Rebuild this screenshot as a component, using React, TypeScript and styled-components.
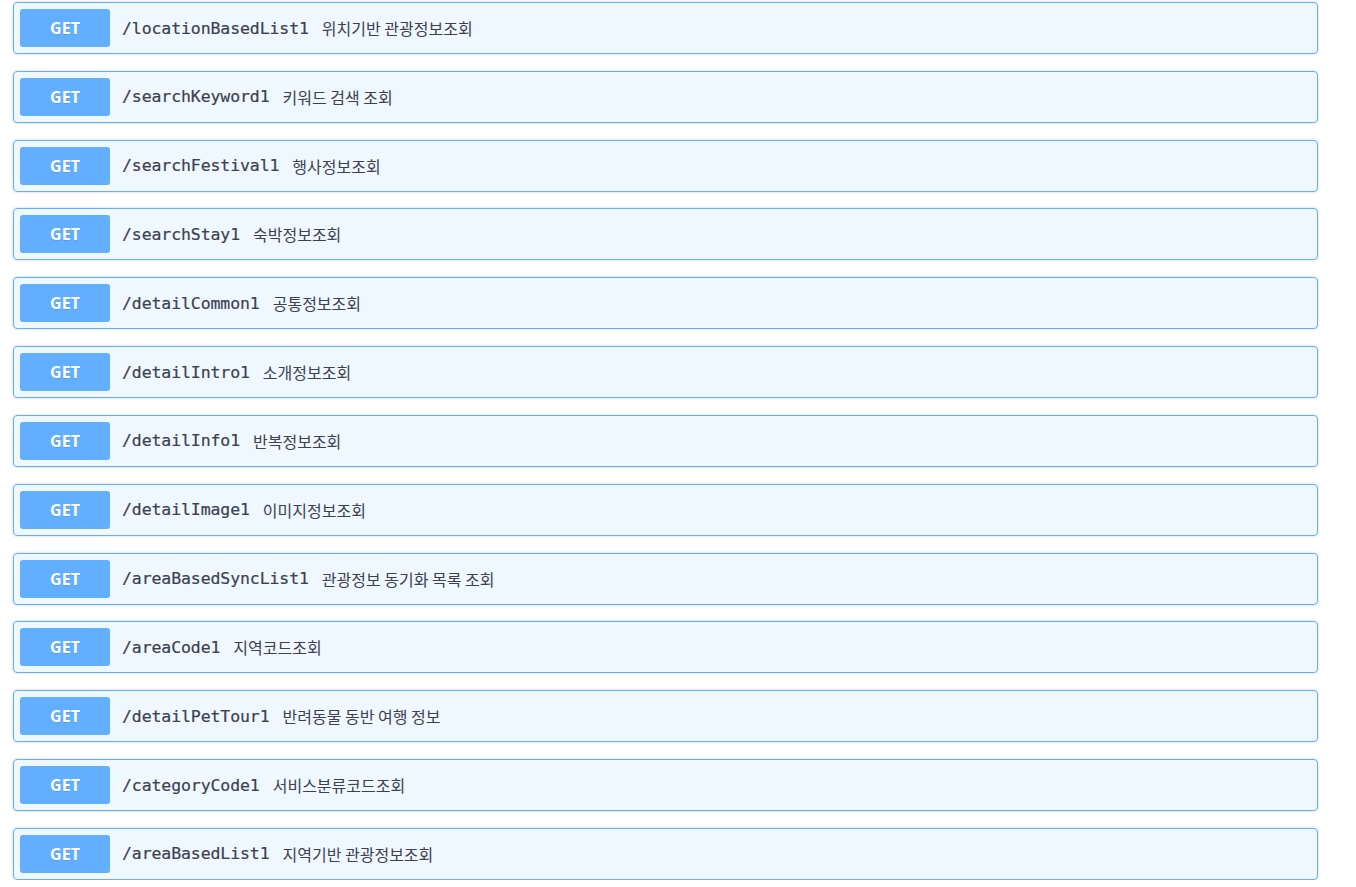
import { FC } from 'react';
import styled, { createGlobalStyle } from 'styled-components';

const GlobalStyle = createGlobalStyle`
  html, body {
    margin: 0;
    padding: 0;
    background: #fff;
  }
`;

const List = styled.div`
  display: flex;
  flex-direction: column;
  gap: 16.83px;
  width: 1305px;
  padding: 2px 0 0 13px;
`;

const Block = styled.div`
  display: flex;
  align-items: center;
  gap: 12px;
  box-sizing: border-box;
  height: 52px;
  padding: 0 6px;
  border: 1px solid #61affe;
  border-radius: 4px;
  background: rgba(97, 175, 254, 0.1);
  box-shadow: 0 0 3px rgba(0, 0, 0, 0.19);
  cursor: pointer;
`;

const Method = styled.span`
  display: flex;
  align-items: center;
  justify-content: center;
  width: 90px;
  height: 38px;
  border-radius: 3px;
  background: #61affe;
  color: #fff;
  font-family: 'Noto Sans', 'Open Sans', sans-serif;
  font-size: 16px;
  font-weight: 700;
  text-shadow: 0 1px 0 rgba(0, 0, 0, 0.1);
`;

const Path = styled.span`
  font-family: 'DejaVu Sans Mono', 'Liberation Mono', monospace;
  font-size: 16.5px;
  font-weight: 400;
  -webkit-text-stroke: 0.2px #3b4151;
  color: #3b4151;
  letter-spacing: -0.1px;
`;

const Desc = styled.span`
  margin-left: 1px;
  font-family: 'Noto Sans CJK KR', 'Noto Sans', sans-serif;
  font-size: 16px;
  color: #3b4151;
`;

interface Operation {
  path: string;
  summary: string;
}

const operations: Operation[] = [
  { path: '/locationBasedList1', summary: '위치기반 관광정보조회' },
  { path: '/searchKeyword1', summary: '키워드 검색 조회' },
  { path: '/searchFestival1', summary: '행사정보조회' },
  { path: '/searchStay1', summary: '숙박정보조회' },
  { path: '/detailCommon1', summary: '공통정보조회' },
  { path: '/detailIntro1', summary: '소개정보조회' },
  { path: '/detailInfo1', summary: '반복정보조회' },
  { path: '/detailImage1', summary: '이미지정보조회' },
  { path: '/areaBasedSyncList1', summary: '관광정보 동기화 목록 조회' },
  { path: '/areaCode1', summary: '지역코드조회' },
  { path: '/detailPetTour1', summary: '반려동물 동반 여행 정보' },
  { path: '/categoryCode1', summary: '서비스분류코드조회' },
  { path: '/areaBasedList1', summary: '지역기반 관광정보조회' },
];

const OperationRow: FC<Operation> = ({ path, summary }) => (
  <Block>
    <Method>GET</Method>
    <Path>{path}</Path>
    <Desc>{summary}</Desc>
  </Block>
);

export default function App() {
  return (
    <>
      <GlobalStyle />
      <List>
        {operations.map((op) => (
          <OperationRow key={op.path} {...op} />
        ))}
      </List>
    </>
  );
}
